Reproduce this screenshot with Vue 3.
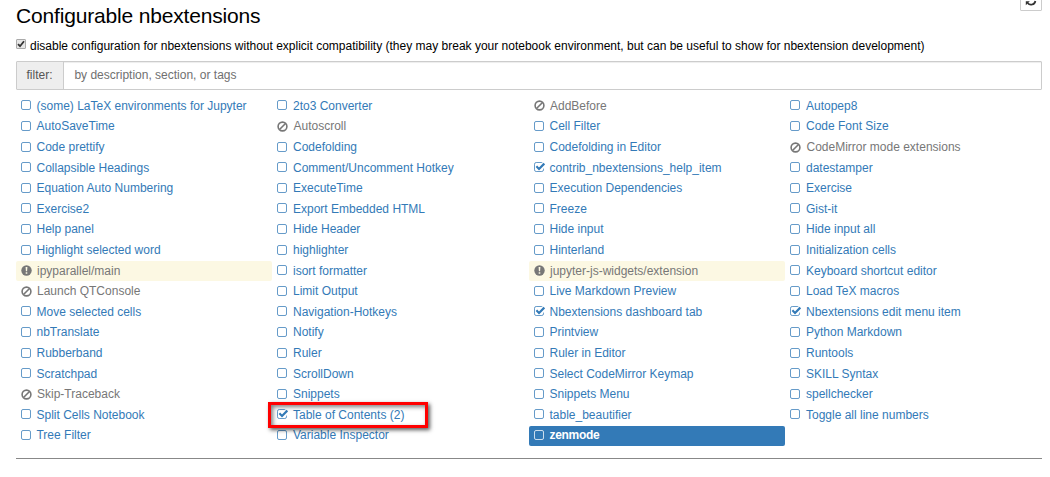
<script setup>
const names = [
  '(some) LaTeX environments for Jupyter', '2to3 Converter', 'AddBefore', 'Autopep8',
  'AutoSaveTime', 'Autoscroll', 'Cell Filter', 'Code Font Size',
  'Code prettify', 'Codefolding', 'Codefolding in Editor', 'CodeMirror mode extensions',
  'Collapsible Headings', 'Comment/Uncomment Hotkey', 'contrib_nbextensions_help_item', 'datestamper',
  'Equation Auto Numbering', 'ExecuteTime', 'Execution Dependencies', 'Exercise',
  'Exercise2', 'Export Embedded HTML', 'Freeze', 'Gist-it',
  'Help panel', 'Hide Header', 'Hide input', 'Hide input all',
  'Highlight selected word', 'highlighter', 'Hinterland', 'Initialization cells',
  'ipyparallel/main', 'isort formatter', 'jupyter-js-widgets/extension', 'Keyboard shortcut editor',
  'Launch QTConsole', 'Limit Output', 'Live Markdown Preview', 'Load TeX macros',
  'Move selected cells', 'Navigation-Hotkeys', 'Nbextensions dashboard tab', 'Nbextensions edit menu item',
  'nbTranslate', 'Notify', 'Printview', 'Python Markdown',
  'Rubberband', 'Ruler', 'Ruler in Editor', 'Runtools',
  'Scratchpad', 'ScrollDown', 'Select CodeMirror Keymap', 'SKILL Syntax',
  'Skip-Traceback', 'Snippets', 'Snippets Menu', 'spellchecker',
  'Split Cells Notebook', 'Table of Contents (2)', 'table_beautifier', 'Toggle all line numbers',
  'Tree Filter', 'Variable Inspector', 'zenmode',
]
const states = {
  AddBefore: 'disabled',
  Autoscroll: 'disabled',
  'CodeMirror mode extensions': 'disabled',
  'Launch QTConsole': 'disabled',
  'Skip-Traceback': 'disabled',
  'ipyparallel/main': 'warning',
  'jupyter-js-widgets/extension': 'warning',
  contrib_nbextensions_help_item: 'checked',
  'Nbextensions dashboard tab': 'checked',
  'Nbextensions edit menu item': 'checked',
  'Table of Contents (2)': 'checked marked',
  zenmode: 'active',
}
const items = names.map((name) => ({ name, state: states[name] || '' }))
</script>

<template>
  <main class="page">
    <header class="head">
      <h3><span>Configurable nbextensions</span></h3>
      <button class="refresh" aria-label="Refresh">
        <svg width="12" height="12" viewBox="0 0 12 12" fill="none" stroke="#333" stroke-width="1.7">
          <path d="M1.6 5A4.4 4.4 0 0 1 9.4 3M10.4 7A4.4 4.4 0 0 1 2.6 9" />
          <path d="M11.2 .8V4.8H7.2zM.8 11.2V7.2H4.8z" fill="#333" stroke="none" />
        </svg>
      </button>
    </header>
    <label class="compat">
      <span class="native">
        <svg width="8" height="8" viewBox="0 0 8 8" fill="none" stroke="#333" stroke-width="1.8"><path d="M1 4.2L3 6.2L7 1.2" /></svg>
      </span>
      <span class="compat-text">disable configuration for nbextensions without explicit compatibility (they may break your notebook environment, but can be useful to show for nbextension development)</span>
    </label>
    <div class="filter">
      <span class="addon">filter:</span>
      <span class="field">by description, section, or tags</span>
    </div>
    <ul class="grid">
      <li v-for="item in items" :key="item.name" :class="item.state">
        <svg v-if="item.state === 'disabled'" class="icon round" width="11" height="11" viewBox="0 0 11 11" fill="none" stroke="currentColor" stroke-width="1.6">
          <circle cx="5.5" cy="5.5" r="4.4" /><path d="M2.5 8.5L8.5 2.5" />
        </svg>
        <svg v-else-if="item.state === 'warning'" class="icon round" width="11" height="11" viewBox="0 0 11 11">
          <circle cx="5.5" cy="5.5" r="5.2" fill="currentColor" /><path d="M4.6 2H6.4L6.1 6.2H4.9zM4.7 7.2H6.3V8.8H4.7z" fill="#fcf8e3" />
        </svg>
        <svg v-else class="icon" width="11" height="11" viewBox="0 0 11 11" fill="none" stroke="currentColor">
          <template v-if="item.state.startsWith('checked')">
            <path d="M8.6 1.2Q8.2 .5 7.5 .5H2.2Q.5 .5 .5 2.2V7.8Q.5 9.5 2.2 9.5H7.8Q9.5 9.5 9.5 7.8V6.6" opacity=".75" />
            <path d="M2.4 4.3L5 6.9L10.3 1.6" stroke-width="2.1" />
          </template>
          <g v-else>
            <rect x=".5" y=".5" width="9" height="9" rx="1.5" opacity=".75" />
          </g>
        </svg>
        <span class="name">{{ item.name }}</span>
        <span v-if="item.state.includes('marked')" class="marker"></span>
      </li>
    </ul>
  </main>
</template>

<style>
body { margin: 0; background: #fff; overflow: hidden; }
</style>

<style scoped>
* { box-sizing: border-box; }
.page { width: 1026px; margin-left: 16px; height: 477px; font-family: "Liberation Sans", Arial, sans-serif; font-size: 12px; color: #000; }
.head { height: 38px; display: flex; justify-content: space-between; align-items: flex-start; }
h3 { margin: 4px 0 0; font-size: 21px; line-height: 24px; font-weight: 400; letter-spacing: -.17px; white-space: nowrap; }
.refresh { width: 22px; height: 22px; margin-top: -11px; padding: 0; border: 1px solid #ccc; border-radius: 1px; background: #fff; display: flex; align-items: center; justify-content: center; }
.refresh svg { margin-top: -1px; }
.compat { height: 23px; display: flex; align-items: flex-start; line-height: 16px; white-space: nowrap; }
.native { width: 10px; height: 10px; margin: 1px 4px 0 0; flex: none; border: 1px solid #aaa; border-radius: 1px; background: #e6e6e6; display: flex; }
.filter { height: 29px; border: 1px solid #ccc; border-radius: 1px; display: flex; line-height: 26px; box-shadow: inset 0 1px 1px rgba(0, 0, 0, .075); }
.addon { width: 47px; padding-left: 9.5px; background: #eee; border-right: 1px solid #ccc; color: #555; }
.field { padding-left: 10.4px; color: #707070; }
.grid { list-style: none; margin: 0; padding: 6.3px 0 12.1px; display: grid; grid-template-columns: repeat(4, 256.5px); row-gap: .6px; border-bottom: 1px solid #888; }
li { position: relative; width: 256px; height: 20px; padding: 0 0 .8px 4.8px; display: flex; align-items: center; line-height: 18px; color: #337ab7; border-radius: 2px; white-space: nowrap; }
.icon { width: 11px; height: 11px; margin-right: 4.7px; flex: none; }
.disabled, .warning { color: #777; }
.round { margin-right: 5.5px; margin-left: -.3px; }
.warning { background: #fcf8e3; }
.active { background: #337ab7; color: #fff; font-weight: 700; }
.active .name { letter-spacing: -.3px; }
.marker { position: absolute; left: -4.5px; top: -3.3px; width: 160px; height: 26px; border: 3px solid #f00; box-shadow: 2px 2px 4px rgba(0, 0, 0, .65), inset 2px 2px 4px rgba(0, 0, 0, .5); z-index: 1; }
</style>
